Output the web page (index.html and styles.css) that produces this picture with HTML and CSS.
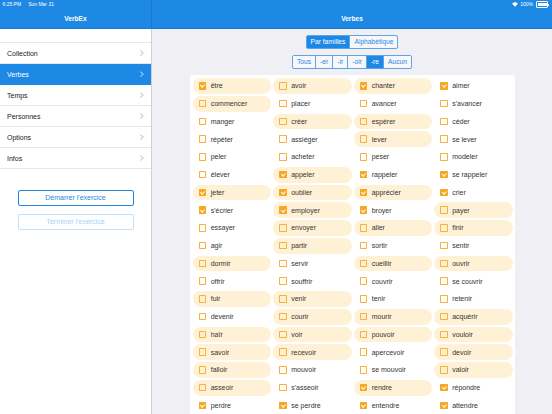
FILE: index.html
```html
<!DOCTYPE html>
<html lang="fr">
<head>
<meta charset="utf-8">
<title>VerbEx</title>
<link rel="stylesheet" href="styles.css">
</head>
<body>
<div class="app">
  <aside class="sidebar">
    <header class="bar bar-side">
      <div class="status status-left"><span>6:25 PM</span><span>Sun Mar 31</span></div>
      <div class="title">VerbEx</div>
    </header>
    <nav class="menu">
      <div class="spacer"></div>
      <div class="row"><span>Collection</span><i class="chev"></i></div>
      <div class="row sel"><span>Verbes</span><i class="chev"></i></div>
      <div class="row"><span>Temps</span><i class="chev"></i></div>
      <div class="row"><span>Personnes</span><i class="chev"></i></div>
      <div class="row"><span>Options</span><i class="chev"></i></div>
      <div class="row"><span>Infos</span><i class="chev"></i></div>
    </nav>
    <div class="actions">
      <div class="btn">Démarrer l'exercice</div>
      <div class="btn off">Terminer l'exercice</div>
    </div>
  </aside>
  <main class="main">
    <header class="bar">
      <div class="status status-right">
        <svg class="wifi" viewBox="0 0 10 8" width="6" height="5"><path d="M5 7.6 L0.2 2.6 A7 7 0 0 1 9.8 2.6 Z" fill="#fff"/></svg>
        <span>100%</span>
        <span class="battery"><span class="level"></span></span><span class="nub"></span>
      </div>
      <div class="title">Verbes</div>
    </header>
    <div class="content">
      <div class="seg">
        <span class="on">Par familles</span><span>Alphabétique</span>
      </div>
      <div class="seg">
        <span>Tous</span><span>-er</span><span>-ir</span><span>-oir</span><span class="on">-re</span><span>Aucun</span>
      </div>
      <div class="card">
        <div class="grid">
          <div class="v hl"><i class="cb on"></i>être</div>
          <div class="v hl"><i class="cb"></i>avoir</div>
          <div class="v hl"><i class="cb on"></i>chanter</div>
          <div class="v"><i class="cb on"></i>aimer</div>

          <div class="v hl"><i class="cb"></i>commencer</div>
          <div class="v"><i class="cb"></i>placer</div>
          <div class="v"><i class="cb"></i>avancer</div>
          <div class="v"><i class="cb"></i>s'avancer</div>

          <div class="v"><i class="cb"></i>manger</div>
          <div class="v hl"><i class="cb"></i>créer</div>
          <div class="v hl"><i class="cb"></i>espérer</div>
          <div class="v"><i class="cb"></i>céder</div>

          <div class="v"><i class="cb"></i>répéter</div>
          <div class="v"><i class="cb"></i>assiéger</div>
          <div class="v hl"><i class="cb"></i>lever</div>
          <div class="v"><i class="cb"></i>se lever</div>

          <div class="v"><i class="cb"></i>peler</div>
          <div class="v"><i class="cb"></i>acheter</div>
          <div class="v"><i class="cb"></i>peser</div>
          <div class="v"><i class="cb"></i>modeler</div>

          <div class="v"><i class="cb"></i>élever</div>
          <div class="v hl"><i class="cb on"></i>appeler</div>
          <div class="v"><i class="cb on"></i>rappeler</div>
          <div class="v"><i class="cb on"></i>se rappeler</div>

          <div class="v hl"><i class="cb on"></i>jeter</div>
          <div class="v hl"><i class="cb on"></i>oublier</div>
          <div class="v hl"><i class="cb on"></i>apprécier</div>
          <div class="v"><i class="cb on"></i>crier</div>

          <div class="v"><i class="cb on"></i>s'écrier</div>
          <div class="v hl"><i class="cb on"></i>employer</div>
          <div class="v"><i class="cb on"></i>broyer</div>
          <div class="v hl"><i class="cb"></i>payer</div>

          <div class="v"><i class="cb"></i>essayer</div>
          <div class="v hl"><i class="cb"></i>envoyer</div>
          <div class="v hl"><i class="cb"></i>aller</div>
          <div class="v hl"><i class="cb"></i>finir</div>

          <div class="v"><i class="cb"></i>agir</div>
          <div class="v hl"><i class="cb"></i>partir</div>
          <div class="v"><i class="cb"></i>sortir</div>
          <div class="v"><i class="cb"></i>sentir</div>

          <div class="v hl"><i class="cb"></i>dormir</div>
          <div class="v"><i class="cb"></i>servir</div>
          <div class="v hl"><i class="cb"></i>cueillir</div>
          <div class="v hl"><i class="cb"></i>ouvrir</div>

          <div class="v"><i class="cb"></i>offrir</div>
          <div class="v"><i class="cb"></i>souffrir</div>
          <div class="v"><i class="cb"></i>couvrir</div>
          <div class="v"><i class="cb"></i>se couvrir</div>

          <div class="v hl"><i class="cb"></i>fuir</div>
          <div class="v hl"><i class="cb"></i>venir</div>
          <div class="v"><i class="cb"></i>tenir</div>
          <div class="v"><i class="cb"></i>retenir</div>

          <div class="v"><i class="cb"></i>devenir</div>
          <div class="v hl"><i class="cb"></i>courir</div>
          <div class="v hl"><i class="cb"></i>mourir</div>
          <div class="v hl"><i class="cb"></i>acquérir</div>

          <div class="v hl"><i class="cb"></i>haïr</div>
          <div class="v hl"><i class="cb"></i>voir</div>
          <div class="v hl"><i class="cb"></i>pouvoir</div>
          <div class="v hl"><i class="cb"></i>vouloir</div>

          <div class="v hl"><i class="cb"></i>savoir</div>
          <div class="v hl"><i class="cb"></i>recevoir</div>
          <div class="v"><i class="cb"></i>apercevoir</div>
          <div class="v hl"><i class="cb"></i>devoir</div>

          <div class="v hl"><i class="cb"></i>falloir</div>
          <div class="v"><i class="cb"></i>mouvoir</div>
          <div class="v"><i class="cb"></i>se mouvoir</div>
          <div class="v hl"><i class="cb"></i>valoir</div>

          <div class="v hl"><i class="cb"></i>asseoir</div>
          <div class="v"><i class="cb"></i>s'asseoir</div>
          <div class="v hl"><i class="cb on"></i>rendre</div>
          <div class="v"><i class="cb on"></i>répondre</div>

          <div class="v"><i class="cb on"></i>perdre</div>
          <div class="v"><i class="cb on"></i>se perdre</div>
          <div class="v"><i class="cb on"></i>entendre</div>
          <div class="v"><i class="cb on"></i>attendre</div>
        </div>
      </div>
    </div>
  </main>
</div>
</body>
</html>
```

FILE: styles.css
```css
html, body {
  margin: 0;
  padding: 0;
}
body {
  width: 552px;
  height: 414px;
  overflow: hidden;
  font-family: "Liberation Sans", Arial, sans-serif;
  background: #efeff4;
  color: #222;
}
.app {
  display: flex;
  width: 552px;
  height: 414px;
}
.sidebar {
  width: 151px;
  flex: none;
  background: #fff;
  border-right: 1px solid #cfcfd4;
  display: flex;
  flex-direction: column;
}
.main {
  flex: 1;
  display: flex;
  flex-direction: column;
  min-width: 0;
}
.bar {
  background: #1e88e5;
  color: #fff;
  height: 28px;
  border-bottom: 1px solid #1878cc;
  display: flex;
  flex-direction: column;
}
.bar-side {
  margin-right: -1px;
  border-right: 1px solid #1878cc;
}
.status {
  height: 9px;
  line-height: 9px;
  font-size: 5px;
  display: flex;
  align-items: center;
}
.status-left {
  padding-left: 2.5px;
  gap: 7px;
}
.status-right {
  justify-content: flex-end;
  padding-right: 3px;
  gap: 2px;
}
.wifi {
  display: block;
}
.battery {
  width: 9px;
  height: 3.5px;
  border: 0.6px solid #fff;
  border-radius: 1px;
  padding: 0.5px;
  margin-left: 1px;
  display: flex;
}
.battery .level {
  flex: 1;
  background: #fff;
}
.nub {
  width: 1px;
  height: 2px;
  background: #fff;
  margin-left: -2px;
}
.title {
  height: 19px;
  line-height: 19px;
  text-align: center;
  font-size: 6.6px;
  font-weight: bold;
}

/* sidebar menu */
.menu {
  display: flex;
  flex-direction: column;
}
.spacer {
  height: 13px;
  border-bottom: 1px solid #e6e6ea;
}
.row {
  height: 20px;
  border-bottom: 1px solid #e6e6ea;
  display: flex;
  align-items: center;
  justify-content: space-between;
  padding: 0 8px 0 7px;
  font-size: 7px;
  color: #222;
}
.row.sel {
  background: #1e88e5;
  color: #fff;
  border-bottom-color: #1e88e5;
}
.chev {
  width: 2.6px;
  height: 2.6px;
  border-top: 0.8px solid #c7c7cc;
  border-right: 0.8px solid #c7c7cc;
  transform: rotate(45deg);
}
.row.sel .chev {
  border-color: #a9d0f5;
}
.actions {
  display: flex;
  flex-direction: column;
  align-items: center;
  gap: 8px;
  padding-top: 21px;
}
.btn {
  width: 114px;
  height: 14px;
  line-height: 14px;
  border: 1px solid #1e88e5;
  border-radius: 2px;
  text-align: center;
  font-size: 7px;
  color: #1e88e5;
}
.btn.off {
  border-color: #c4e0f9;
  color: #a6cff4;
}

/* main content */
.content {
  display: flex;
  flex-direction: column;
  align-items: center;
  padding-top: 6px;
  gap: 6px;
}
.seg {
  display: flex;
  border: 1px solid #5aa5ec;
  border-radius: 2px;
  height: 12px;
  background: #f7f7fa;
}
.seg span {
  padding: 0 4px;
  line-height: 12px;
  font-size: 6.7px;
  color: #1e88e5;
  border-left: 1px solid #5aa5ec;
}
.seg span:first-child {
  border-left: none;
}
.seg span.on {
  background: #1e88e5;
  color: #fff;
}
.card {
  width: 320px;
  background: #fff;
  border-radius: 3px;
  padding: 3px 2px 3px 3px;
}
.grid {
  display: grid;
  grid-template-columns: repeat(4, 78.5px);
  grid-auto-rows: 15.75px;
  column-gap: 2px;
  row-gap: 2px;
}
.v {
  display: flex;
  align-items: center;
  padding-left: 6px;
  border-radius: 8px;
  font-size: 7px;
  color: #333;
  white-space: nowrap;
}
.v.hl {
  background: #fff1d6;
}
.cb {
  position: relative;
  width: 5.6px;
  height: 5.6px;
  border: 0.9px solid #f8b23a;
  border-radius: 0.8px;
  margin-right: 4.6px;
  flex: none;
}
.cb.on {
  background: #f7a823;
  border-color: #f7a823;
}
.cb.on::after {
  content: "";
  position: absolute;
  left: 1.9px;
  top: 0.4px;
  width: 1.5px;
  height: 3.2px;
  border: solid #fff;
  border-width: 0 0.8px 0.8px 0;
  transform: rotate(45deg);
}
```
